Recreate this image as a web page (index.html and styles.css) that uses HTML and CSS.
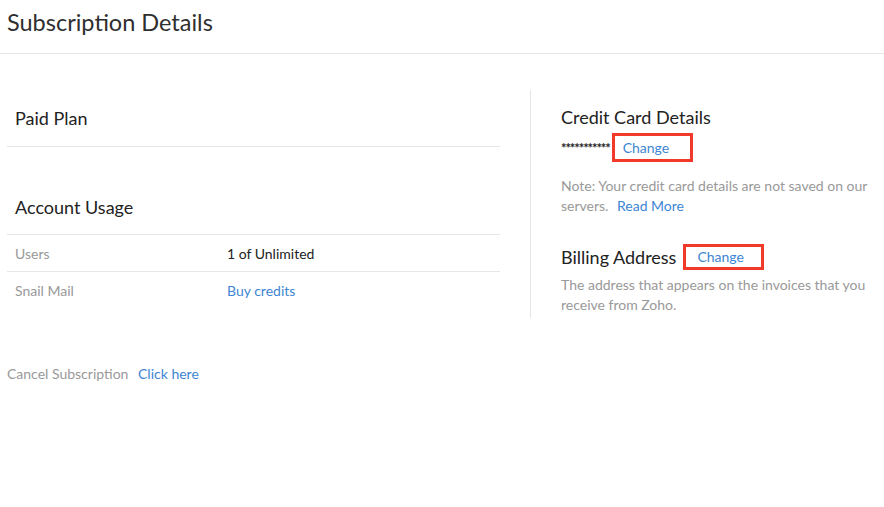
FILE: index.html
```html
<!DOCTYPE html>
<html lang="en">
<head>
  <meta charset="UTF-8">
  <title>Subscription Details</title>
  <link rel="stylesheet" href="styles.css">
</head>
<body>
  <h1 class="page-title">Subscription Details</h1>

  <div class="details">
    <div class="col-left">
      <div class="section plan">
        <h2>Paid Plan</h2>
      </div>
      <div class="section usage">
        <h2>Account Usage</h2>
        <div class="usage-row">
          <span class="label">Users</span>
          <span class="value">1 of Unlimited</span>
        </div>
        <div class="usage-row">
          <span class="label">Snail Mail</span>
          <a class="value link" href="#">Buy credits</a>
        </div>
      </div>
    </div>

    <div class="col-right">
      <h2>Credit Card Details</h2>
      <div class="card-line">
        <span class="masked">***********</span>
        <a class="link marked" href="#">Change</a>
      </div>
      <p class="note">Note: Your credit card details are not saved on our servers. <a class="link more" href="#">Read More</a></p>

      <div class="billing-head">
        <h2>Billing Address</h2>
        <a class="link marked" href="#">Change</a>
      </div>
      <p class="note">The address that appears on the invoices that you receive from Zoho.</p>
    </div>
  </div>

  <div class="cancel">
    <span class="label">Cancel Subscription</span>
    <a class="link" href="#">Click here</a>
  </div>
</body>
</html>
```

FILE: styles.css
```css
body {
  margin: 0;
  font-family: Lato, "Open Sans", sans-serif;
  color: #333;
  background: #fff;
}
a {
  text-decoration: none;
}
.link,
.usage-row .link {
  color: #3d86d3;
}
.page-title {
  margin: 0;
  padding: 8px 7px 0;
  height: 45px;
  font-size: 23.5px;
  font-weight: 400;
  color: #2f2f2f;
  border-bottom: 1px solid #e6e6e6;
}
h2 {
  margin: 0;
  font-size: 18px;
  font-weight: 400;
  color: #222;
}
.details {
  display: flex;
  margin-top: 36px;
  padding: 0 7px;
}
.col-left {
  flex: 0 0 493px;
}
.section h2 {
  padding-left: 8px;
}
.plan {
  padding-top: 17px;
  height: 39px;
  border-bottom: 1px solid #e6e6e6;
}
.usage {
  padding-top: 49px;
}
.usage h2 {
  padding-bottom: 16px;
  border-bottom: 1px solid #e6e6e6;
}
.usage-row {
  display: flex;
  align-items: center;
  height: 36px;
  font-size: 14px;
}
.usage-row + .usage-row {
  border-top: 1px solid #e6e6e6;
}
.label {
  color: #999;
  font-size: 14px;
}
.usage-row .label {
  width: 212px;
  padding-left: 8px;
}
.value {
  color: #222;
}
.col-right {
  flex: 1;
  margin-left: 30px;
  padding: 16px 0 0 30px;
  height: 212px;
  border-left: 1px solid #e6e6e6;
}
.card-line {
  display: flex;
  align-items: center;
  margin-top: 5px;
}
.masked {
  font-size: 13px;
  color: #222;
  letter-spacing: -1.1px;
  font-weight: 700;
}
.marked {
  display: inline-block;
  box-sizing: border-box;
  font-size: 14px;
  border: 3px solid #f23a2a;
}
.card-line .marked {
  width: 81px;
  height: 29px;
  padding: 3px 0 0 8px;
  margin-left: 2px;
}
.note {
  margin: 14px 0 0;
  font-size: 14px;
  line-height: 20px;
  color: #999;
}
.more {
  margin-left: 5px;
}
.billing-head {
  display: flex;
  align-items: center;
  margin-top: 28px;
}
.billing-head .marked {
  margin-left: 7px;
  width: 81px;
  height: 26px;
  padding: 1px 0 0 11px;
}
.billing-head + .note {
  margin-top: 5px;
}
.cancel {
  margin-top: 47px;
  padding-left: 7px;
  font-size: 14px;
}
.cancel .link {
  margin-left: 6px;
}
```
